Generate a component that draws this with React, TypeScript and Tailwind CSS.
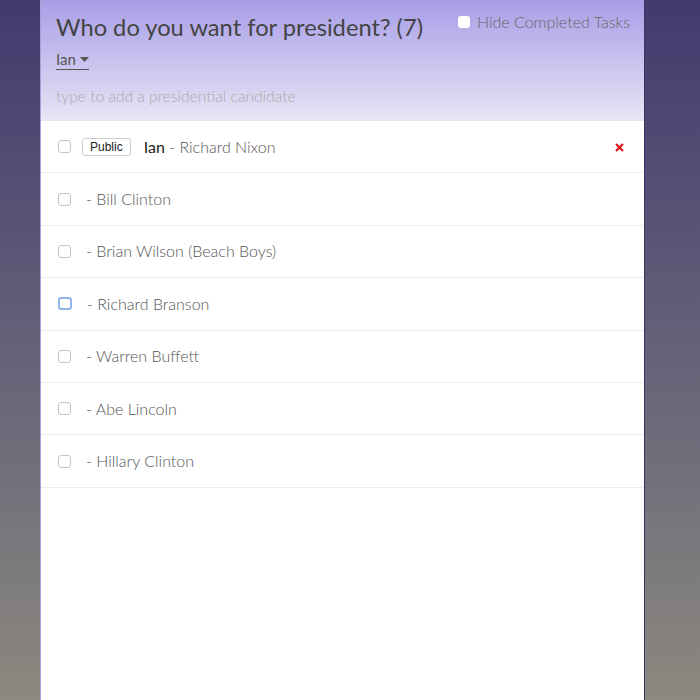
import React from "react";

const items = [
  { name: "Richard Nixon", user: "Ian", pub: true },
  { name: "Bill Clinton" },
  { name: "Brian Wilson (Beach Boys)" },
  { name: "Richard Branson", focus: true },
  { name: "Warren Buffett" },
  { name: "Abe Lincoln" },
  { name: "Hillary Clinton" },
];

function Box({ focus }: { focus?: boolean }) {
  return focus ? (
    <span className="inline-block w-[14px] h-[13px] rounded-[3px] border-2 border-[#8fb6ea] bg-white shrink-0" />
  ) : (
    <span className="inline-block w-[13px] h-[13px] rounded-[3px] border border-[#c4c4c4] bg-white shrink-0" />
  );
}

export default function App() {
  return (
    <div
      className="w-[700px] h-[700px] overflow-hidden bg-gradient-to-b from-[#423a6e] to-[#8c897f]"
      style={{ fontFamily: "Lato, 'Noto Sans', sans-serif" }}
    >
      <div className="ml-[40px] w-[605px] h-[700px] bg-white flex flex-col border-l border-l-[#a9a0d8] border-r border-r-[#3a3266]">
        <header className="h-[121px] bg-gradient-to-b from-[#a99ee7] to-[#e7e6f4] px-[15px] pt-[12px] relative">
          <h1 className="text-[23.7px] leading-[30px] text-[#444] font-normal">
            Who do you want for president? (7)
          </h1>
          <div className="mt-[8px] text-[15px] leading-[18px] text-[#555] flex items-center">
            <span className="border-b border-[#555] flex items-center pb-[1px]">
              Ian
              <svg width="9" height="6" viewBox="0 0 9 6" className="ml-[4px] mt-[1px]">
                <path d="M0 0 L9 0 L4.5 5 Z" fill="#555" />
              </svg>
            </span>
          </div>
          <div className="mt-[16px] text-[15.6px] leading-[20px] text-[#aaa] font-light">
            type to add a presidential candidate
          </div>
          <label className="absolute right-[14px] top-[12px] flex items-center text-[16px] leading-[20px] text-[#666] font-light">
            <span className="inline-block w-[12px] h-[12px] rounded-[3px] bg-white mr-[7px]" />
            Hide Completed Tasks
          </label>
        </header>
        <ul>
          {items.map((it, i) => (
            <li
              key={i}
              className="h-[52.4px] border-b border-[#ececec] flex items-center pl-[17px] pr-[20px]"
            >
              <Box focus={it.focus} />
              {it.pub ? (
                <>
                  <span
                    className="ml-[11px] mt-[1px] h-[18px] px-[7px] border border-[#cfcfcf] rounded-[3px] text-[12px] leading-[16px] text-[#222] bg-white"
                    style={{ fontFamily: "'Liberation Sans', Arial, sans-serif" }}
                  >
                    Public
                  </span>
                  <span className="ml-[13px] text-[16px] text-[#222] font-normal">Ian</span>
                  <span className="text-[16px] text-[#555] font-light">&nbsp;- {it.name}</span>
                  <span className="ml-auto leading-none mt-[2px]">
                    <svg width="9" height="9" viewBox="0 0 9 9">
                      <path d="M1 1 L8 8 M8 1 L1 8" stroke="#e01010" strokeWidth="2" />
                    </svg>
                  </span>
                </>
              ) : (
                <span className="ml-[15px] text-[16px] text-[#555] font-light">- {it.name}</span>
              )}
            </li>
          ))}
        </ul>
      </div>
    </div>
  );
}
